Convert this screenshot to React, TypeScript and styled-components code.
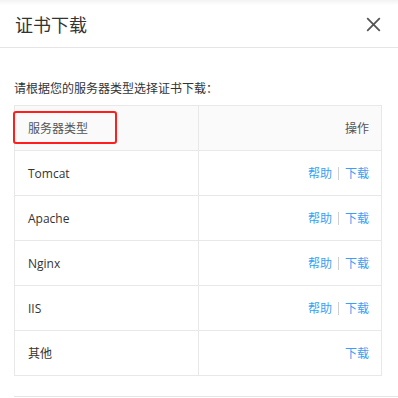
import React from 'react';
import styled, { createGlobalStyle } from 'styled-components';

const GlobalStyle = createGlobalStyle`
  html, body {
    margin: 0;
    padding: 0;
    background: #fff;
  }
  body {
    font-family: 'Open Sans', 'Noto Sans CJK SC', sans-serif;
    color: #333;
  }
`;

interface Server {
  name: string;
  help?: boolean;
}

const servers: Server[] = [
  { name: 'Tomcat', help: true },
  { name: 'Apache', help: true },
  { name: 'Nginx', help: true },
  { name: 'IIS', help: true },
  { name: '其他' },
];

const Modal = styled.div`
  width: 398px;
  height: 398px;
  overflow: hidden;
`;

const Header = styled.div`
  height: 48px;
  display: flex;
  align-items: center;
  justify-content: space-between;
  padding: 2px 17px 0 15px;
  box-sizing: border-box;
  background: linear-gradient(#f2f2f2 0, #fff 5px);
  border-bottom: 1px solid #e5e5e5;
`;

const Title = styled.div`
  font-size: 18px;
  line-height: 24px;
  color: #333;
`;

const Close = styled.button`
  border: 0;
  background: none;
  padding: 0;
  width: 15px;
  height: 15px;
  display: flex;
  cursor: pointer;
`;

const Body = styled.div`
  padding: 0 16px 0 14px;
`;

const Intro = styled.p`
  margin: 32px 0 7px;
  font-size: 12px;
  line-height: 18px;
  color: #333;
`;

const Table = styled.table`
  width: 100%;
  border-collapse: collapse;
  font-size: 12px;
  table-layout: fixed;
`;

const HeadCell = styled.th<{ $right?: boolean }>`
  position: relative;
  height: 44px;
  padding: 0 12px 0 13px;
  background: #fafafa;
  border: 1px solid #e8e8e8;
  font-weight: normal;
  color: #555;
  text-align: ${(p) => (p.$right ? 'right' : 'left')};
`;

const Cell = styled.td<{ $right?: boolean }>`
  height: 44px;
  padding: 0 12px 0 13px;
  border: 1px solid #e8e8e8;
  color: #333;
  text-align: ${(p) => (p.$right ? 'right' : 'left')};
`;

const Highlight = styled.span`
  position: absolute;
  left: -2px;
  top: 5px;
  width: 104px;
  height: 33px;
  box-sizing: border-box;
  border: 2.5px solid #ff1d1d;
  border-radius: 3px;
`;

const Link = styled.a`
  color: #3a9ff5;
  text-decoration: none;
  cursor: pointer;
`;

const Sep = styled.span`
  display: inline-block;
  width: 1px;
  height: 13px;
  margin: 0 6px;
  background: #d0d0d0;
  vertical-align: -2px;
`;

const Footer = styled.div`
  margin: 20px 0 0 14px;
  border-top: 1px solid #e5e5e5;
`;

export default function App() {
  return (
    <Modal>
      <GlobalStyle />
      <Header>
        <Title>证书下载</Title>
        <Close aria-label="关闭">
          <svg width="15" height="15" viewBox="0 0 15 15">
            <path d="M1.2 1.2 L13.8 13.8 M13.8 1.2 L1.2 13.8" stroke="#555" strokeWidth="1.8" />
          </svg>
        </Close>
      </Header>
      <Body>
        <Intro>请根据您的服务器类型选择证书下载：</Intro>
        <Table>
          <thead>
            <tr>
              <HeadCell>
                服务器类型
                <Highlight />
              </HeadCell>
              <HeadCell $right>操作</HeadCell>
            </tr>
          </thead>
          <tbody>
            {servers.map((s) => (
              <tr key={s.name}>
                <Cell>{s.name}</Cell>
                <Cell $right>
                  {s.help && (
                    <>
                      <Link>帮助</Link>
                      <Sep />
                    </>
                  )}
                  <Link>下载</Link>
                </Cell>
              </tr>
            ))}
          </tbody>
        </Table>
      </Body>
      <Footer />
    </Modal>
  );
}
